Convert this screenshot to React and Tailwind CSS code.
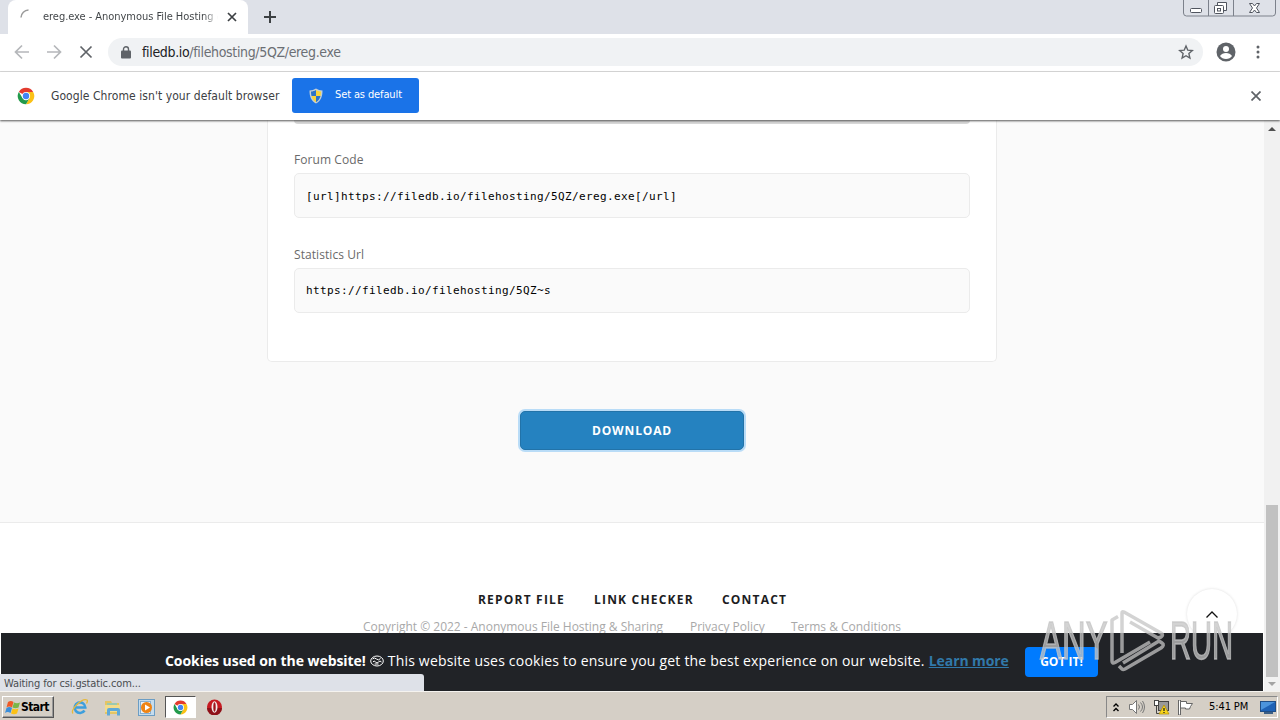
import clsx from 'clsx';

const UI_FONT = "font-['DejaVu_Sans_Condensed','DejaVu_Sans',sans-serif]";
const WEB_FONT = "font-['Open_Sans',sans-serif]";

function ChromeLogo({ size }) {
  return (
    <svg width={size} height={size} viewBox="0 0 48 48">
      <circle cx="24" cy="24" r="22" fill="#fff" />
      <path d="M24 24 4.9 13A22 22 0 0 1 43.1 13H24z" fill="#e33b2e" />
      <path d="M24 13h19.1A22 22 0 0 1 24 46l9.5-16.5z" fill="#fbc116" />
      <path d="M24 46A22 22 0 0 1 4.9 13l9.6 16.5L24 35l9.5-5.5z" fill="#229a4b" />
      <circle cx="24" cy="24" r="11" fill="#fff" />
      <circle cx="24" cy="24" r="8.5" fill="#4285f4" />
    </svg>
  );
}

function Shield() {
  return (
    <svg width="16" height="16" viewBox="0 0 16 16">
      <path d="M8 .5C6 1.800 4 2.300 1.500 2.500c0 6 1.500 10.500 6.500 13 5-2.500 6.500-7 6.500-13C12 2.300 10 1.800 8 .5z" fill="#c3cfd6" />
      <path d="M8 2C6.300 3 4.800 3.400 3 3.600 3 5.500 3.200 6.800 3.500 8H8z" fill="#2b73c9" />
      <path d="M8 2c1.700 1 3.200 1.400 5 1.600 0 1.900-.2 3.200-.5 4.400H8z" fill="#f7d33c" />
      <path d="M3.500 8C4.200 10.900 5.700 12.900 8 14.200V8z" fill="#f7d33c" />
      <path d="M12.500 8c-.7 2.900-2.200 4.900-4.500 6.200V8z" fill="#2b73c9" />
    </svg>
  );
}

function TabStrip() {
  return (
    <div className="relative flex h-[34px] shrink-0 bg-[#dee1e8]">
      <div className="ml-2 flex h-[34px] w-[240px] items-center rounded-t-lg bg-white pl-3">
        <svg width="16" height="16" viewBox="0 0 16 16">
          <path d="M1 8.500A8 8 0 0 1 8.500 1" fill="none" stroke="#9a9a9a" strokeWidth="1.500" />
        </svg>
        <div className="ml-[7px] w-[175px] overflow-hidden whitespace-nowrap bg-linear-to-r from-[#3c4043] from-92% to-transparent bg-clip-text text-[11px] tracking-[-0.04px] text-transparent">
          ereg.exe - Anonymous File Hosting &amp; Sharing
        </div>
        <svg className="ml-[9px]" width="10" height="10" viewBox="0 0 10 10" stroke="#3c4043" strokeWidth="1.700">
          <path d="M1 1l8 8M9 1L1 9" />
        </svg>
      </div>
      <svg className="ml-4 mt-[11px]" width="12" height="12" viewBox="0 0 12 12" stroke="#3c4043" strokeWidth="2">
        <path d="M6 0v12M0 6h12" />
      </svg>
      <svg className="ml-auto mr-1" width="93" height="17" viewBox="0 0 93 17" fill="none" stroke="#7c818b">
        <path d="M.5 0v13q0 3 3 3h86q3 0 3-3V0M25.500 0v16M50.500 0v16" />
        <g stroke="#50555f">
          <rect x="7.500" y="8.500" width="11" height="4" rx="1" fill="#fff" />
          <path d="M34.500 5.500v-3h9v8h-3" fill="#fff" />
          <rect x="31.500" y="5.500" width="9" height="8" rx="1" fill="#fff" />
          <rect x="34.500" y="8.500" width="3" height="2.500" />
          <path d="M66.500 3.500h3l2 2.500 2-2.500h3l-3 4.500 3 4.500h-3l-2-2.500-2 2.500h-3l3-4.500z" fill="#fff" />
        </g>
      </svg>
    </div>
  );
}

function Toolbar() {
  return (
    <div className="flex h-[38px] shrink-0 items-center border-b border-[#dcdcdc] bg-white pb-px">
      <svg className="ml-[14px]" width="80" height="16" viewBox="0 0 80 16" fill="none" stroke="#b5b7ba" strokeWidth="1.700">
        <path d="M15 8H2M8 1.500L1.500 8 8 14.500M33 8h13M40 1.500L46.500 8 40 14.500" />
        <path d="M66.500 2.500l11 11M77.500 2.500l-11 11" stroke="#5f6368" />
      </svg>
      <div className="ml-[14px] flex h-7 w-[1095px] items-center rounded-full bg-[#f0f2f4]">
        <svg className="ml-[13px]" width="10" height="13" viewBox="0 0 10 13">
          <rect y="4.500" width="10" height="8" rx="1" fill="#5f6368" />
          <path d="M2.500 5V3.200a2.500 2.500 0 0 1 5 0V5" fill="none" stroke="#5f6368" strokeWidth="1.400" />
        </svg>
        <div className="ml-[11px] whitespace-nowrap text-[14px] tracking-[-0.34px] text-[#6b6f74]">
          <span className="text-[#202124]">filedb.io</span>/filehosting/5QZ/ereg.exe
        </div>
        <svg className="ml-auto mr-[9px]" width="16" height="16" viewBox="0 0 16 16" fill="none" stroke="#5f6368" strokeWidth="1.400">
          <path d="M8 2l1.800 4.200 4.500.4-3.400 3 1 4.400L8 11.700 4.100 14l1-4.400-3.400-3 4.500-.4z" />
        </svg>
      </div>
      <svg className="ml-[13px]" width="20" height="20" viewBox="0 0 20 20">
        <circle cx="10" cy="10" r="9.500" fill="#5f6368" />
        <circle cx="10" cy="7" r="3" fill="#fff" />
        <path d="M4 14q2-3 6-3t6 3q-2 3-6 3t-6-3z" fill="#fff" />
      </svg>
      <svg className="ml-5" width="4" height="14" viewBox="0 0 4 14" fill="#5f6368">
        <circle cx="2" cy="2" r="1.500" />
        <circle cx="2" cy="7" r="1.500" />
        <circle cx="2" cy="12" r="1.500" />
      </svg>
    </div>
  );
}

function InfoBar() {
  return (
    <div className="relative z-10 flex h-12 shrink-0 items-center bg-white pb-px shadow-[0_1px_2px_#555]">
      <div className="ml-[17px]">
        <ChromeLogo size={18} />
      </div>
      <div className="ml-4 w-[241px] whitespace-nowrap text-[12px] tracking-[0.07px] text-[#3c4043]">
        Google Chrome isn't your default browser
      </div>
      <button className="flex h-[35px] w-[127px] items-center rounded-[3px] bg-[#1a73e8] text-[11px] text-white">
        <span className="ml-4 mr-[11px]">
          <Shield />
        </span>
        <span className="whitespace-nowrap tracking-[-0.12px]">Set as default</span>
      </button>
      <svg className="ml-auto mr-[19px]" width="10" height="10" viewBox="0 0 10 10" stroke="#5f6368" strokeWidth="1.700">
        <path d="M.5.5l9 9M9.500.5l-9 9" />
      </svg>
    </div>
  );
}

function CodeField({ label, value, className, inputClassName }) {
  return (
    <div className={className}>
      <div className="h-[22px] text-[12px] leading-[18px] tracking-[0.07px] text-[#6a6a6a]">{label}</div>
      <div
        className={clsx(
          "flex h-[45px] items-center rounded-[5px] border border-[#ebebeb] bg-[#fafafa] pl-[11px] font-['DejaVu_Sans_Mono',monospace] text-[11px] tracking-[0.378px] text-black",
          inputClassName
        )}
      >
        {value}
      </div>
    </div>
  );
}

function Page() {
  return (
    <div className={clsx('flex min-w-0 flex-1 flex-col bg-[#fafafa]', WEB_FONT)}>
      <div className="ml-[267px] h-[242px] w-[730px] shrink-0 rounded-b-[5px] border border-t-0 border-[#ebebeb] bg-white px-[26px]">
        <div className="h-[4px] rounded-b-[5px] bg-[#d8d8d8]" />
        <CodeField
          className="mt-[27px]"
          inputClassName="pt-[3px]"
          label="Forum Code"
          value="[url]https://filedb.io/filehosting/5QZ/ereg.exe[/url]"
        />
        <CodeField className="mt-7" inputClassName="pt-px" label="Statistics Url" value="https://filedb.io/filehosting/5QZ~s" />
      </div>
      <button className="ml-[520px] mt-[49px] h-[39px] w-[224px] shrink-0 rounded-[5px] border border-[#2273a9] bg-[#2582c0] text-[12px] font-bold tracking-[0.83px] text-white shadow-[0_0_0_2px_#b9dcf7]">
        DOWNLOAD
      </button>
      <div className="mt-[72px] flex-1 border-t border-[#ebebeb] bg-white">
        <div className="mt-[68px] flex h-[18px] items-center whitespace-nowrap pl-[478px] text-[12px] font-bold tracking-[1.2px] text-[#1d1d1f]">
          <div className="w-[116px]">REPORT FILE</div>
          <div className="w-[128px]">LINK CHECKER</div>
          <div>CONTACT</div>
        </div>
        <div className="mt-[9px] flex h-[18px] items-center whitespace-nowrap pl-[363px] text-[12px] tracking-[-0.01px] text-[#a8a8a8]">
          <div className="w-[327px]">Copyright © 2022 - Anonymous File Hosting &amp; Sharing</div>
          <div className="w-[101px]">Privacy Policy</div>
          <div>Terms &amp; Conditions</div>
        </div>
      </div>
    </div>
  );
}

function Scrollbar() {
  return (
    <div className="flex w-4 shrink-0 flex-col items-center bg-[#f1f1f1]">
      <svg className="mt-[7px]" width="8" height="4" viewBox="0 0 8 4" fill="#505050">
        <path d="M0 4l4-4 4 4z" />
      </svg>
      <div className="mt-[374px] h-[172px] w-3 bg-[#c1c1c1]" />
      <svg className="mt-[5px]" width="8" height="4" viewBox="0 0 8 4" fill="#a3a3a3">
        <path d="M0 0l4 4 4-4z" />
      </svg>
    </div>
  );
}

function CookieBar() {
  return (
    <div className={clsx('absolute bottom-0 left-px right-[17px] flex h-[58px] items-center whitespace-nowrap bg-[#212327] pb-[3px] text-[14px] text-white', WEB_FONT)}>
      <div className="ml-[164px] font-bold tracking-[-0.06px]">Cookies used on the website!</div>
      <svg className="ml-1" width="14" height="12" viewBox="0 0 14 12" fill="none" stroke="#fff">
        <ellipse cx="7" cy="6" rx="6.300" ry="5" />
        <path d="M2.500 4q2-2 4 0t4-.5M3 7q1-2 2.500 0t3 0 3 0M4.500 9h4" />
      </svg>
      <div className="ml-1 tracking-[0.2px]">This website uses cookies to ensure you get the best experience on our website.</div>
      <div className="ml-1 font-bold tracking-[-0.08px] text-[#3179aa] underline">Learn more</div>
      <button className="absolute left-[1024px] top-[14px] h-[30px] w-[73px] rounded bg-[#007bff] text-[12px] font-bold">
        GOT IT!
      </button>
    </div>
  );
}

function Watermark() {
  return (
    <div className="absolute left-[1040px] top-[489px] flex items-center text-[#c4c4c4]/75 font-['Liberation_Sans',sans-serif] [-webkit-text-stroke:1.500px_rgb(196_196_196/0.75)]">
      <div className="w-[69px]">
        <div className="origin-left scale-x-[0.620] text-[53px] leading-[64px]">ANY</div>
      </div>
      <svg width="58" height="64" viewBox="0 0 58 64" fill="none" stroke="currentColor" strokeWidth="3.500" strokeLinejoin="round">
        <path d="M9 7.500L3 11v41q0 3 3 1.500L41 33" />
        <path d="M13 44V4q0-2 2-1l37 21q3 2 0 4l-3 1L21 13M13 11v0" />
        <path d="M10 57l3 3q1 1 3 0l36-21q4-3 1-5l-3-2L14 54" />
      </svg>
      <div className="ml-[3px] w-[63px]">
        <div className="origin-left scale-x-[0.550] text-[53px] leading-[64px]">RUN</div>
      </div>
    </div>
  );
}

function Taskbar() {
  return (
    <div className="flex h-[29px] shrink-0 items-center border-t border-[#f5f3ef] bg-[#d5cfc6] pt-[2px]">
      <button className="ml-[2px] flex h-[22px] w-[52px] items-center border border-b-[#555] border-l-white border-r-[#555] border-t-white pl-[2px] text-[12px] font-bold tracking-[-0.6px] text-black shadow-[inset_-1px_-1px_#999]">
        <svg width="16" height="15" viewBox="0 0 16 15">
          <path d="M3 2q3-2 5.500 0L7 7.500Q4 5.500 1.500 7.500z" fill="#ef5a27" />
          <path d="M9 2.500q3 1.500 6 0L13.500 7.500q-3 1.500-6 0z" fill="#7ab648" />
          <path d="M1.500 8q3-2 5.500 0l-1.500 5q-3-2-5.500 0z" fill="#3a8edb" />
          <path d="M7.500 8.500q3 1.500 6 0L12 13.500q-3 1.500-6 0z" fill="#fbc116" />
        </svg>
        Start
      </button>
      <svg className="ml-[17px]" width="18" height="18" viewBox="0 0 18 18" fill="none">
        <path d="M13.500 12.500A5.300 5.300 0 1 1 14.300 9.500H4" stroke="#3d9fdd" strokeWidth="2.600" />
        <path d="M2 15.500C-1 12 11-.5 16 2c1 .8 0 2.500-.5 3.500" stroke="#e6b93c" strokeWidth="1.300" />
      </svg>
      <svg className="ml-[15px]" width="18" height="17" viewBox="0 0 18 17">
        <path d="M1 2h6l1 2h7v11H1z" fill="#e4c565" />
        <path d="M3 4h10v3H3z" fill="#9ac9b0" />
        <path d="M1 6h15v7H1z" fill="#f3dc8b" />
        <path d="M3 16.500V11q0-2 2-2h9q2 0 2 2v5.500h-3V12H6v4.500z" fill="#5fa9d8" />
      </svg>
      <svg className="ml-4" width="17" height="17" viewBox="0 0 17 17">
        <rect x=".5" y=".5" width="16" height="16" fill="#c5dced" stroke="#6b9dc4" />
        <rect x="2.500" y="2.500" width="10" height="12" fill="#e8f1f8" stroke="#87afd0" />
        <circle cx="8.500" cy="8.500" r="5.500" fill="#ef8414" />
        <path d="M7 5.500l5 3-5 3z" fill="#fff" />
      </svg>
      <div className="ml-[10px] flex h-[22px] w-[31px] items-center justify-center border border-b-white border-l-[#555] border-r-white border-t-[#555] bg-white">
        <ChromeLogo size={15} />
      </div>
      <svg className="ml-[10px]" width="17" height="16" viewBox="0 0 16 16">
        <circle cx="8" cy="8" r="7.500" fill="#c61a22" />
        <path d="M.5 9a7.500 7.500 0 0 0 15 0z" fill="#8e1018" />
        <ellipse cx="8" cy="8" rx="3" ry="5.800" fill="#f4eeee" />
        <ellipse cx="8" cy="8" rx="1.200" ry="4.800" fill="#a0141c" />
      </svg>
      <div className="ml-auto mr-[2px] flex h-[22px] w-[172px] items-center border border-b-white border-l-[#888] border-r-white border-t-[#888] pl-[6px] text-[11px] text-black">
        <svg width="6" height="9" viewBox="0 0 6 9" fill="none" stroke="#000" strokeWidth="1.400">
          <path d="M.5 3.500L3 1l2.500 2.500M.5 8L3 5.500 5.500 8" />
        </svg>
        <svg className="ml-[10px]" width="16" height="14" viewBox="0 0 16 14" fill="none" stroke="#777">
          <path d="M.5 4.500h3l4-4v13l-4-4h-3z" fill="#fff" />
          <path d="M9.500 4.500q2 2.500 0 5M11.500 2.500q4 4.500 0 9M13.500 1q4 6 0 12" />
        </svg>
        <svg className="ml-2" width="17" height="16" viewBox="0 0 17 16">
          <rect x="5.500" y="2.500" width="10" height="9" fill="#999" stroke="#444" />
          <rect x="1.500" y="1.500" width="4" height="5" fill="#fff" stroke="#444" />
          <path d="M3.500 6.500v8h4" fill="none" stroke="#444" />
          <path d="M11 6l5 9H6z" fill="#f8d51b" stroke="#b08b00" strokeWidth=".7" />
          <path d="M11 9v3M11 13v1" stroke="#222" strokeWidth="1.300" />
        </svg>
        <svg className="ml-[7px]" width="17" height="15" viewBox="0 0 17 15" fill="#fff" stroke="#666">
          <path d="M1.500 0v15h2V0z" />
          <path d="M3.500 1.500h6v2h6l-2 3-1 2.500h-4v-1h-5z" />
        </svg>
        <div className="ml-[15px] w-[42px] whitespace-nowrap tracking-[-0.1px]">5:41 PM</div>
        <svg className="ml-[9px]" width="16" height="13" viewBox="0 0 16 13">
          <rect x=".5" y=".5" width="15" height="10" fill="#1f62b5" stroke="#204e86" />
          <path d="M1 1h14L1 9z" fill="#4c94dc" />
          <path d="M4 12h9" stroke="#3c5f85" strokeWidth="2" />
        </svg>
      </div>
    </div>
  );
}

export default function App() {
  return (
    <div className={clsx('flex h-[720px] w-[1280px] flex-col overflow-hidden bg-white', UI_FONT)}>
      <TabStrip />
      <Toolbar />
      <InfoBar />
      <div className="relative flex min-h-0 flex-1 overflow-hidden">
        <Page />
        <Scrollbar />
        {/* floating "back to top" button */}
        <div className="absolute left-[1187px] top-[469px] flex size-[50px] items-center justify-center rounded-full bg-white shadow-[0_0_3px_#ddd]">
          <svg width="12" height="7" viewBox="0 0 12 7" fill="none" stroke="#111" strokeWidth="1.300">
            <path d="M.5 6.500L6 1l5.500 5.500" />
          </svg>
        </div>
        <CookieBar />
        <Watermark />
        <div className="absolute bottom-0 left-0 flex h-[17px] w-[424px] items-center rounded-tr-[3px] bg-[#dee1e8] pl-1 pt-[3px] text-[11px] tracking-[-0.13px] text-[#4a4d51]">
          Waiting for csi.gstatic.com...
        </div>
      </div>
      <Taskbar />
    </div>
  );
}
